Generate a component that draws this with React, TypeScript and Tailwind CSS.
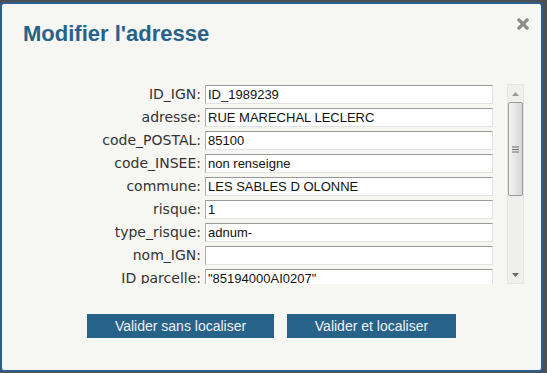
import React from "react";

const rows: [string, string][] = [
  ["ID_IGN:", "ID_1989239"],
  ["adresse:", "RUE MARECHAL LECLERC"],
  ["code_POSTAL:", "85100"],
  ["code_INSEE:", "non renseigne"],
  ["commune:", "LES SABLES D OLONNE"],
  ["risque:", "1"],
  ["type_risque:", "adnum-"],
  ["nom_IGN:", ""],
  ["ID parcelle:", "\"85194000AI0207\""],
];

export default function App() {
  return (
    <div className="w-[547px] h-[373px] bg-[#4d4f52] pt-[2px] overflow-hidden">
      <div className="w-[543px] h-[370px] bg-[#f6f6f2] border-2 border-[#2c5e8e] rounded-[4px] flex flex-col">
        <div className="flex justify-between items-start mt-[17px] pl-[21px] pr-[12px]">
          <h1 className="text-[22px] leading-[26px] font-bold text-[#28628a] font-['Liberation_Sans',Arial,sans-serif]">
            Modifier l'adresse
          </h1>
          <svg width="12" height="12" viewBox="0 0 12 12" className="mt-[-3px]">
            <path d="M2 2 L10 10 M10 2 L2 10" stroke="#8c8c8c" strokeWidth="3.2" strokeLinecap="square" />
          </svg>
        </div>
        <div className="flex mt-[37px] ml-[38px] h-[200px]">
          <div className="w-[467px] h-[200px] overflow-hidden pt-[1px]">
            {rows.map(([label, value]) => (
              <div key={label} className="flex items-center h-[23px] pb-[4px]">
                <div className="w-[161px] text-right text-[14px] text-[#333] font-['DejaVu_Sans',Verdana,sans-serif] leading-[19px]">
                  {label}
                </div>
                <div className="ml-[4px] w-[288px] h-[19px] bg-white border border-t-[#999] border-l-[#aaa] border-r-[#e2e2e2] border-b-[#e2e2e2] pl-[2px] text-[13px] leading-[17px] text-[#111] font-['Liberation_Sans',Arial,sans-serif] whitespace-nowrap overflow-hidden">
                  {value}
                </div>
              </div>
            ))}
          </div>
          <div className="w-[17px] h-[200px] bg-[#efefed] border border-[#e4e4e2] flex flex-col items-center">
            <div className="h-[17px] w-full flex items-center justify-center">
              <svg width="7" height="4" viewBox="0 0 7 4"><path d="M0 4 L3.5 0 L7 4 Z" fill="#9a9a9a" /></svg>
            </div>
            <div className="w-[15px] h-[94px] rounded-[2px] border border-[#9b9b9b] bg-gradient-to-r from-[#f4f4f4] to-[#d6d6d6] flex items-center justify-center">
              <svg width="7" height="7" viewBox="0 0 7 7">
                <path d="M0 1 H7 M0 3.5 H7 M0 6 H7" stroke="#6a6a6a" strokeWidth="1" />
              </svg>
            </div>
            <div className="flex-1" />
            <div className="h-[17px] w-full flex items-center justify-center">
              <svg width="7" height="4" viewBox="0 0 7 4"><path d="M0 0 L3.5 4 L7 0 Z" fill="#6a6a6a" /></svg>
            </div>
          </div>
        </div>
        <div className="flex justify-center gap-[13px] mt-[30px]">
          <button className="w-[187px] h-[24px] bg-[#276289] text-[#f2f2f2] text-[14px] font-['Liberation_Sans',Arial,sans-serif] leading-[24px]">
            Valider sans localiser
          </button>
          <button className="w-[169px] h-[24px] bg-[#276289] text-[#f2f2f2] text-[14px] font-['Liberation_Sans',Arial,sans-serif] leading-[24px]">
            Valider et localiser
          </button>
        </div>
      </div>
    </div>
  );
}
